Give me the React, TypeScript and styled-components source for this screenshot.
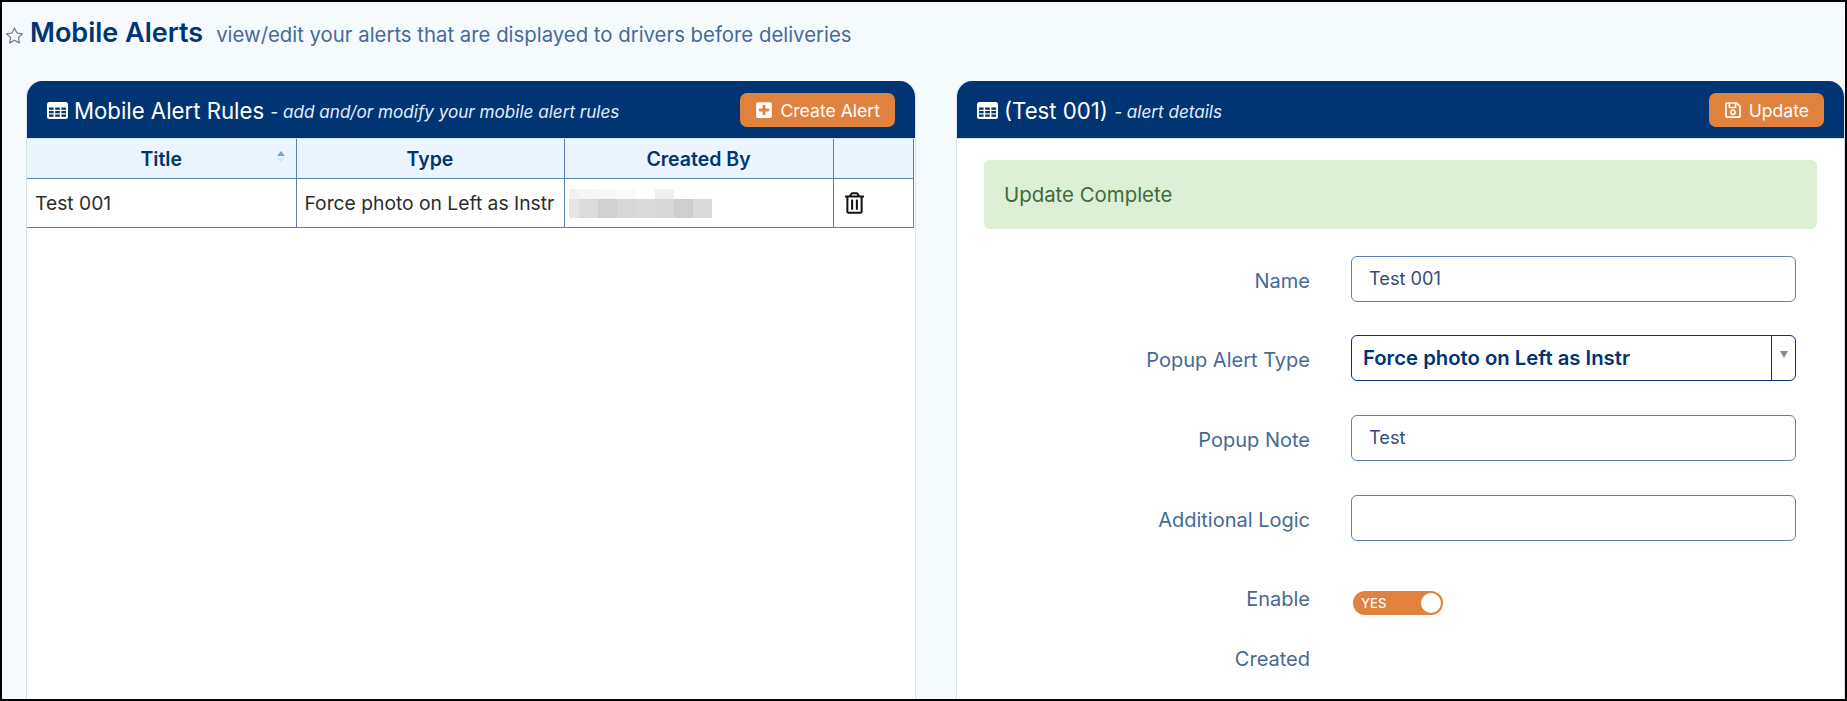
import React from "react";
import styled, { createGlobalStyle } from "styled-components";
import { BsStar } from "react-icons/bs";
import { FaPlusSquare, FaRegSave, FaRegTrashAlt } from "react-icons/fa";

const Global = createGlobalStyle`
  html, body { margin: 0; padding: 0; height: 100%; overflow: hidden; }
  body { font-family: Inter, "Liberation Sans", sans-serif; }
  #root { height: 100%; }
`;

const Page = styled.div`
  box-sizing: border-box;
  height: 701px;
  border: 2px solid #000;
  background: #f5faff;
  overflow: hidden;
  display: flex;
  flex-direction: column;
`;

const Heading = styled.header`
  height: 79px;
  flex: none;
  box-sizing: border-box;
  display: flex;
  align-items: baseline;
  padding: 14px 0 0 4px;
`;

const HeadingStar = styled(BsStar)`
  width: 17px;
  height: 17px;
  color: #6c7680;
  margin-right: 7px;
  align-self: flex-start;
  margin-top: 11px;
`;

const HeadingTitle = styled.h1`
  margin: 0;
  font-size: 27px;
  font-weight: 600;
  color: #003473;
`;

const HeadingNote = styled.span`
  margin-left: 13px;
  font-size: 20.35px;
  color: #466a94;
`;

const Columns = styled.div`
  flex: 1;
  min-height: 0;
  display: grid;
  grid-template-columns: 890px 889px;
  column-gap: 40px;
  padding-left: 24px;
`;

const Panel = styled.section`
  display: flex;
  flex-direction: column;
  min-height: 0;
  background: #fff;
  border-left: 1px solid #d8e2ee;
  border-right: 1px solid #d8e2ee;
  border-radius: 16px 16px 0 0;
  overflow: hidden;
`;

const PanelBar = styled.div`
  height: 58px;
  flex: none;
  margin: 0 -1px;
  box-sizing: border-box;
  background: #003473;
  color: #fff;
  display: flex;
  align-items: center;
  justify-content: space-between;
  padding: 1px 21px 0 21px;
  border-bottom: 1px solid #d8e2ee;
`;

const PanelTitle = styled.div`
  display: flex;
  align-items: center;
  font-size: 22.2px;
  white-space: pre;
`;

const TitleIcon = styled.svg`
  width: 21px;
  height: 17px;
  margin-right: 6px;
  flex: none;
`;

const TitleNote = styled.em`
  font-size: 17.1px;
  color: #e3eefc;
  margin-top: 2px;
`;

const ActionButton = styled.button`
  height: 34px;
  box-sizing: border-box;
  border: 0;
  border-radius: 7px;
  background: #e0823d;
  color: #fff;
  display: flex;
  align-items: center;
  gap: 7px;
  padding: 0 15px;
  font: 400 17.6px Inter, "Liberation Sans", sans-serif;
`;

const Grid = styled.table`
  width: 886px;
  border-collapse: collapse;
  table-layout: fixed;
  font-size: 19.25px;
`;

const HeadCell = styled.th`
  position: relative;
  height: 39px;
  padding: 0;
  background: #ebf5ff;
  color: #003473;
  font-size: 19.5px;
  font-weight: 600;
  border-right: 1px solid #5b7fae;
  border-bottom: 1px solid #5b7fae;
`;

const BodyCell = styled.td`
  height: 48px;
  padding: 0 8px;
  color: #2c2c2c;
  white-space: nowrap;
  overflow: hidden;
  border-right: 1px solid #5b7fae;
  border-bottom: 1px solid #5b7fae;
`;

const SortMark = styled.svg`
  position: absolute;
  right: 10px;
  top: 12px;
  width: 10px;
  height: 14px;
`;

const TrashIcon = styled(FaRegTrashAlt)`
  display: block;
  width: 19px;
  height: 22px;
  margin-left: 3px;
  color: #111;
`;

const Blur = styled.svg`
  display: block;
  margin: 1px 0 0 -4px;
`;

const DetailBody = styled.div`
  padding: 21px 27px 0;
`;

const Notice = styled.div`
  height: 69px;
  box-sizing: border-box;
  border-radius: 6px;
  background: #deefd8;
  color: #3f6b38;
  font-size: 20.4px;
  display: flex;
  align-items: center;
  padding: 0 20px;
`;

const Form = styled.div`
  margin-top: 27px;
  display: grid;
  grid-template-columns: 326px 445px;
  grid-template-rows: 45px 46px 46px 46px;
  column-gap: 41px;
  row-gap: 34px;
  align-items: center;
`;

const Label = styled.label`
  text-align: right;
  font-size: 20px;
  color: #466a94;
  padding-top: 4px;
`;

const TextField = styled.div`
  box-sizing: border-box;
  align-self: start;
  height: 46px;
  border: 1px solid #5b7fae;
  border-radius: 6px;
  background: #fff;
  color: #2f4f78;
  font-size: 18.2px;
  padding: 0 17px 2px;
  display: flex;
  align-items: center;
`;

const SelectField = styled.div`
  box-sizing: border-box;
  align-self: start;
  height: 46px;
  border: 1px solid #003473;
  border-radius: 6px;
  display: flex;
  color: #003473;
  font-size: 20.3px;
  font-weight: 600;
`;

const SelectValue = styled.div`
  flex: 1;
  display: flex;
  align-items: center;
  padding: 0 11px 1px;
`;

const SelectArrow = styled.div`
  width: 24px;
  border-left: 1px solid #003473;
  display: flex;
  justify-content: center;
  padding-top: 15px;
  box-sizing: border-box;
`;

const ArrowDown = styled.span`
  width: 0;
  height: 0;
  border-left: 4px solid transparent;
  border-right: 4px solid transparent;
  border-top: 7px solid #8a8a8a;
`;

const ToggleRows = styled.div`
  display: grid;
  grid-template-columns: 326px 445px;
  column-gap: 41px;
  margin-top: 41px;
  grid-template-rows: 40px 80px;
  align-items: center;
`;

const ToggleLabel = styled(Label)`
  padding: 0 0 6px;
`;

const ToggleTrack = styled.div`
  position: relative;
  margin: 1px 0 0 2px;
  width: 90px;
  height: 24px;
  border-radius: 12px;
  background: #e0823d;
  color: #fff;
  font-size: 13px;
  font-weight: 500;
  display: flex;
  align-items: center;
  padding-left: 8px;
  box-sizing: border-box;
`;

const ToggleKnob = styled.span`
  position: absolute;
  right: 2px;
  top: 2px;
  width: 20px;
  height: 20px;
  border-radius: 50%;
  background: #fff;
`;

const mosaic: [number, number, number, number, string][] = [
  [0, 0, 10, 10, "#f2f2f2"], [10, 0, 19, 10, "#f5f6f5"], [29, 0, 19, 10, "#f8f8f8"], [48, 0, 19, 10, "#fafafa"], [86, 0, 19, 10, "#efefef"],
  [0, 10, 10, 19, "#e6e5e4"], [10, 10, 19, 19, "#dcdbda"], [29, 10, 19, 19, "#d0d0d0"], [48, 10, 19, 19, "#d8d8da"],
  [67, 10, 19, 19, "#dbdad8"], [86, 10, 19, 19, "#d8d8d8"], [105, 10, 19, 19, "#cecece"], [124, 10, 19, 19, "#dadada"],
];

const cells = [5.5, 9, 12.5].flatMap((y) => [2, 8.2, 14.4].map((x) => ({ x, y })));

const GridGlyph = () => (
  <TitleIcon viewBox="0 0 21 17">
    <rect width="21" height="17" rx="2.5" fill="#fff" />
    {cells.map(({ x, y }) => (
      <rect key={`${x}-${y}`} x={x} y={y} width="4.6" height="2.3" fill="#003473" />
    ))}
  </TitleIcon>
);

export default function App() {
  return (
    <Page>
      <Global />
      <Heading>
        <HeadingStar />
        <HeadingTitle>Mobile Alerts</HeadingTitle>
        <HeadingNote>view/edit your alerts that are displayed to drivers before deliveries</HeadingNote>
      </Heading>
      <Columns>
        <Panel>
          <PanelBar>
            <PanelTitle>
              <GridGlyph />
              Mobile Alert Rules <TitleNote>- add and/or modify your mobile alert rules</TitleNote>
            </PanelTitle>
            <ActionButton><FaPlusSquare size={18} />Create Alert</ActionButton>
          </PanelBar>
          <Grid>
            <colgroup>
              <col width="269" />
              <col width="268" />
              <col width="269" />
              <col width="80" />
            </colgroup>
            <thead>
              <tr>
                <HeadCell>
                  Title
                  <SortMark viewBox="0 0 10 14">
                    <path d="M5 0 9 5H1Z" fill="#6da5e0" />
                    <path d="M5 12 9 7H1Z" fill="#d9e6f4" />
                  </SortMark>
                </HeadCell>
                <HeadCell>Type</HeadCell>
                <HeadCell>Created By</HeadCell>
                <HeadCell />
              </tr>
            </thead>
            <tbody>
              <tr>
                <BodyCell>Test 001</BodyCell>
                <BodyCell>Force photo on Left as Instr</BodyCell>
                <BodyCell>
                  <Blur width="143" height="29" viewBox="0 0 143 29">
                    {mosaic.map(([x, y, w, h, c]) => (
                      <rect key={`${x}-${y}`} x={x} y={y} width={w} height={h} fill={c} />
                    ))}
                  </Blur>
                </BodyCell>
                <BodyCell><TrashIcon /></BodyCell>
              </tr>
            </tbody>
          </Grid>
        </Panel>
        <Panel>
          <PanelBar>
            <PanelTitle>
              <GridGlyph />
              (Test 001) <TitleNote>- alert details</TitleNote>
            </PanelTitle>
            <ActionButton><FaRegSave size={18} />Update</ActionButton>
          </PanelBar>
          <DetailBody>
            <Notice>Update Complete</Notice>
            <Form>
              <Label>Name</Label>
              <TextField>Test 001</TextField>
              <Label>Popup Alert Type</Label>
              <SelectField>
                <SelectValue>Force photo on Left as Instr</SelectValue>
                <SelectArrow><ArrowDown /></SelectArrow>
              </SelectField>
              <Label>Popup Note</Label>
              <TextField>Test</TextField>
              <Label>Additional Logic</Label>
              <TextField />
            </Form>
            <ToggleRows>
              <ToggleLabel>Enable</ToggleLabel>
              <ToggleTrack>YES<ToggleKnob /></ToggleTrack>
              <ToggleLabel>Created</ToggleLabel>
              <span />
            </ToggleRows>
          </DetailBody>
        </Panel>
      </Columns>
    </Page>
  );
}
